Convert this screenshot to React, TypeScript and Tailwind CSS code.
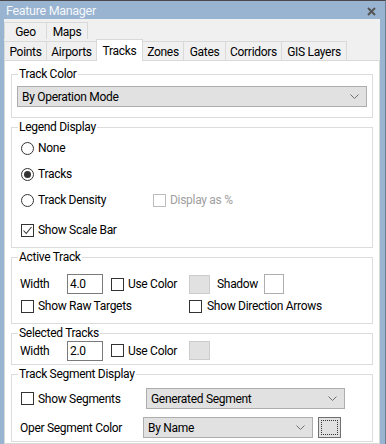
import React from 'react';

// Windows-style "Feature Manager" dialog, Tracks tab

const tabsTop = [
  { label: 'Geo', w: 'w-[43px] border-l' },
  { label: 'Maps', w: 'w-[41px]' },
];

const tabsBottom = [
  { label: 'Points', w: 'w-[43px] border-l' },
  { label: 'Airports', w: 'w-[50px]' },
  { label: 'Tracks', w: 'w-[47px]', selected: true },
  { label: 'Zones', w: 'w-[41px]' },
  { label: 'Gates', w: 'w-[42px]' },
  { label: 'Corridors', w: 'w-[56px]' },
  { label: 'GIS Layers', w: 'w-[65px]' },
];

function Checkbox({ checked = false, disabled = false }: { checked?: boolean; disabled?: boolean }) {
  return (
    <span
      className={`flex h-[13px] w-[13px] shrink-0 items-center justify-center border bg-white ${
        disabled ? 'border-[#bcbcbc]' : 'border-[#333333]'
      }`}
    >
      {checked && (
        <svg width="11" height="11" viewBox="0 0 11 11">
          <polyline points="1.5,5.5 4.2,8.5 9.5,2" fill="none" stroke="#333333" strokeWidth="1.1" />
        </svg>
      )}
    </span>
  );
}

function Radio({ checked = false }: { checked?: boolean }) {
  return (
    <span className="flex h-[13px] w-[13px] shrink-0 items-center justify-center rounded-full border border-[#333333] bg-white">
      {checked && <span className="h-[7px] w-[7px] rounded-full bg-[#333333]" />}
    </span>
  );
}

function Chevron() {
  return (
    <svg width="9" height="6" viewBox="0 0 9 6" className="shrink-0">
      <polyline points="0.5,0.5 4.5,4.5 8.5,0.5" fill="none" stroke="#707070" strokeWidth="1" />
    </svg>
  );
}

function Combo({ text, className }: { text: string; className: string }) {
  return (
    <div
      className={`flex items-center justify-between border border-[#adadad] bg-[#e1e1e1] pl-[4px] pr-[7px] ${className}`}
    >
      <span>{text}</span>
      <Chevron />
    </div>
  );
}

function TextBox({ value }: { value: string }) {
  return (
    <div className="flex h-[20px] w-[36px] shrink-0 items-center border border-[#7a7a7a] bg-white pl-[2px]">
      {value}
    </div>
  );
}

function Group({ title, className, children }: { title: string; className: string; children: React.ReactNode }) {
  return (
    <fieldset className={`mx-[6px] border border-[#dcdcdc] ${className}`}>
      <legend className="ml-[6px] px-[1px] leading-[15px]">{title}</legend>
      {children}
    </fieldset>
  );
}

export default function App() {
  return (
    <div className="flex h-[444px] w-[386px] flex-col overflow-hidden border-t border-r border-t-[#4a4a4a] border-r-[#6b7d93] bg-[#99b4d1] font-['Roboto',sans-serif] text-[12px] tracking-[-0.3px] text-black">
      {/* Title bar */}
      <div className="flex h-[18px] shrink-0 items-center justify-between pl-[6px] pr-[9px] pt-[3px]">
        <span className="text-[12.5px] leading-none text-[#f4f7fb]">Feature Manager</span>
        <svg width="9" height="9" viewBox="0 0 9 9">
          <path d="M1 1 L8 8 M8 1 L1 8" stroke="#555555" strokeWidth="2" />
        </svg>
      </div>

      {/* Window body */}
      <div className="ml-[4px] mr-[5px] flex flex-1 flex-col bg-[#f0f0f0] pt-[3px]">
        {/* Tab headers */}
        <div className="flex h-[17px]">
          {tabsTop.map((t) => (
            <div
              key={t.label}
              className={`flex items-center justify-center border-t border-r border-[#d9d9d9] pt-[2px] ${t.w}`}
            >
              {t.label}
            </div>
          ))}
        </div>
        <div className="flex h-[21px] items-end">
          {tabsBottom.map((t) =>
            t.selected ? (
              <div
                key={t.label}
                className={`relative z-10 -mb-[1px] -ml-[1px] flex h-[22px] items-start justify-center border-x border-t border-[#d9d9d9] bg-white pt-[2px] ${t.w}`}
              >
                {t.label}
              </div>
            ) : (
              <div
                key={t.label}
                className={`flex h-[19px] items-center justify-center border-t border-r border-[#d9d9d9] pt-[2px] ${t.w}`}
              >
                {t.label}
              </div>
            )
          )}
        </div>

        {/* Tab page */}
        <div className="flex flex-1 flex-col gap-[2px] border border-[#d9d9d9] bg-white pt-[6px]">
          <Group title="Track Color" className="h-[51px]">
            <Combo text="By Operation Mode" className="mx-[5px] mt-[4px] h-[21px]" />
          </Group>

          <Group title="Legend Display" className="h-[128px]">
            <div className="flex flex-col pl-[9px]">
              <div className="flex h-[26px] items-center gap-[4px]">
                <Radio />
                <span>None</span>
              </div>
              <div className="flex h-[26px] items-center gap-[4px]">
                <Radio checked />
                <span>Tracks</span>
              </div>
              <div className="flex h-[26px] items-center">
                <Radio />
                <span className="ml-[4px] w-[115px]">Track Density</span>
                <Checkbox disabled />
                <span className="ml-[4px] text-[#a0a0a0]">Display as %</span>
              </div>
              <div className="mt-[4px] flex h-[26px] items-center gap-[4px]">
                <Checkbox checked />
                <span>Show Scale Bar</span>
              </div>
            </div>
          </Group>

          <Group title="Active Track" className="h-[74px]">
            <div className="mt-[9px] flex h-[20px] items-center pl-[8px]">
              <span className="w-[47px]">Width</span>
              <TextBox value="4.0" />
              <span className="ml-[8px]">
                <Checkbox />
              </span>
              <span className="ml-[4px] w-[61px]">Use Color</span>
              <span className="h-[19px] w-[21px] border border-[#cccccc] bg-[#e1e1e1]" />
              <span className="ml-[7px] w-[47px]">Shadow</span>
              <span className="h-[20px] w-[20px] border border-[#adadad] bg-white" />
            </div>
            <div className="mt-[4px] flex h-[16px] items-center pl-[9px]">
              <Checkbox />
              <span className="ml-[4px] w-[151px]">Show Raw Targets</span>
              <Checkbox />
              <span className="ml-[5px]">Show Direction Arrows</span>
            </div>
          </Group>

          <Group title="Selected Tracks" className="h-[39px]">
            <div className="flex h-[19px] items-center pl-[8px]">
              <span className="w-[47px]">Width</span>
              <TextBox value="2.0" />
              <span className="ml-[8px]">
                <Checkbox />
              </span>
              <span className="ml-[4px] w-[61px]">Use Color</span>
              <span className="h-[19px] w-[21px] border border-[#cccccc] bg-[#e1e1e1]" />
            </div>
          </Group>

          <Group title="Track Segment Display" className="h-[75px]">
            <div className="mt-[6px] flex h-[21px] items-center pl-[9px]">
              <Checkbox />
              <span className="ml-[4px] w-[108px]">Show Segments</span>
              <Combo text="Generated Segment" className="h-[21px] w-[199px]" />
            </div>
            <div className="mt-[8px] flex h-[21px] items-center pl-[8px]">
              <span className="w-[123px]">Oper Segment Color</span>
              <Combo text="By Name" className="h-[21px] w-[170px]" />
              <span className="ml-[5px] flex h-[21px] w-[23px] items-center justify-center border border-[#6f6f6f] bg-[#e1e1e1]">
                <span className="h-[15px] w-[17px] border border-dotted border-[#333333]" />
              </span>
            </div>
          </Group>
        </div>
      </div>
    </div>
  );
}
